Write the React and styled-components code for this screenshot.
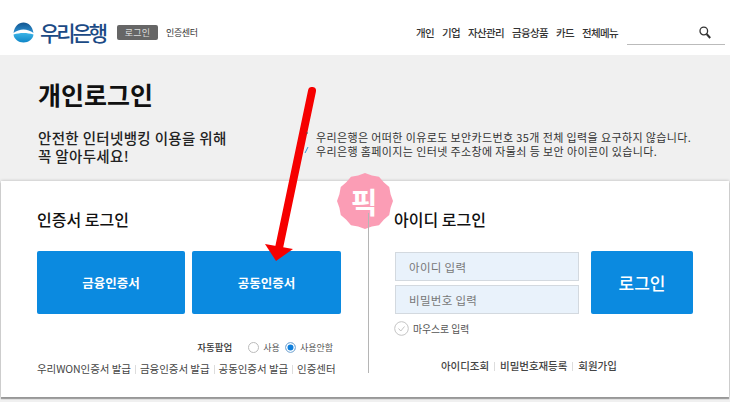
import React from 'react'
import styled, { createGlobalStyle } from 'styled-components'

const GlobalStyle = createGlobalStyle`
  html, body {
    margin: 0;
    padding: 0;
    background: #f0f0f0;
  }
  body {
    font-family: "Noto Sans CJK KR", "Noto Sans", sans-serif;
    color: #333;
  }
`

const Page = styled.div`
  position: relative;
  width: 730px;
  height: 402px;
  overflow: hidden;
  background: #f0f0f0;
`

const Header = styled.header`
  display: flex;
  align-items: center;
  height: 55px;
  padding: 9px 5px 0 13px;
  box-sizing: border-box;
  background: #fff;
`

const Brand = styled.div`
  display: flex;
  align-items: center;
  gap: 6px;
  width: 104px;
`

const BrandName = styled.span`
  font-size: 21px;
  font-weight: 500;
  letter-spacing: -3.1px;
  color: #1b4a85;
  line-height: 1;
  white-space: nowrap;
`

const LoginTag = styled.span`
  width: 41px;
  height: 15px;
  line-height: 15px;
  margin-right: 8px;
  text-align: center;
  border-radius: 2px;
  background: #666;
  color: #ddd;
  font-size: 9px;
  letter-spacing: 0.3px;
`

const CertLink = styled.span`
  font-size: 9px;
  color: #333;
  letter-spacing: -0.4px;
`

const Nav = styled.nav`
  display: flex;
  gap: 8px;
  margin-left: auto;
  margin-right: 9px;
`

const NavItem = styled.span`
  font-size: 10.5px;
  font-weight: 500;
  color: #333;
  letter-spacing: -0.66px;
  white-space: nowrap;
`

const Search = styled.div`
  display: flex;
  justify-content: flex-end;
  align-items: center;
  width: 98px;
  height: 24px;
  margin-top: 2px;
  padding-right: 14px;
  box-sizing: border-box;
  border-bottom: 1px solid #bbb;
`

const Hero = styled.section`
  display: flex;
  height: 126px;
  padding-left: 38px;
  box-sizing: border-box;
`

const HeroLeft = styled.div`
  width: 278px;
`

const HeroTitle = styled.h1`
  margin: 22px 0 0;
  font-size: 25px;
  line-height: 34px;
  font-weight: 700;
  color: #111;
`

const HeroText = styled.p`
  margin: 18px 0 0;
  font-size: 14.5px;
  line-height: 18px;
  font-weight: 500;
  color: #222;
  letter-spacing: 0.34px;
`

const Notices = styled.ul`
  margin: 75px 0 0;
  padding: 0;
  list-style: none;
`

const Notice = styled.li`
  font-size: 11px;
  line-height: 14px;
  color: #333;
  letter-spacing: 0.38px;
  white-space: nowrap;
`

const Card = styled.main`
  display: flex;
  height: 216px;
  margin: 0 1px;
  background: #fff;
  box-shadow: 0 0 3px rgba(0, 0, 0, 0.25), 0 2px 1px rgba(0, 0, 0, 0.3);
`

const Column = styled.div`
  width: ${({ $width }) => $width}px;
  padding-left: ${({ $left }) => $left}px;
  box-sizing: border-box;
`

const Divider = styled.div`
  position: relative;
  z-index: 1;
  width: 1px;
  height: 160px;
  margin-top: 32px;
  background: #b5b5b5;
`

const SectionTitle = styled.h2`
  margin: 27px 0 0;
  font-size: 16px;
  line-height: 22px;
  font-weight: 500;
  color: #111;
`

const BlueRow = styled.div`
  display: flex;
  gap: 7px;
  margin-top: 21px;
`

const BlueButton = styled.button`
  width: ${({ $width }) => $width}px;
  height: 63px;
  border: 0;
  border-radius: 2px;
  padding: 0;
  background: #0b8ae0;
  color: #fff;
  font-family: inherit;
  font-size: ${({ $size }) => $size}px;
  font-weight: ${({ $weight }) => $weight};
`

const PopupRow = styled.div`
  display: flex;
  align-items: center;
  justify-content: flex-end;
  width: 296px;
  height: 16px;
  margin-top: 25px;
  font-size: 9px;
  color: #555;
`

const PopupLabel = styled.span`
  margin-right: 16px;
  font-size: 9.5px;
  font-weight: 500;
  color: #333;
`

const Radio = styled.span`
  width: 9px;
  height: 9px;
  margin-right: 4px;
  border: 1px solid ${({ $on }) => ($on ? '#9bbad8' : '#bbb')};
  border-radius: 50%;
  background: ${({ $on }) => ($on ? '#0f7fdc' : '#fff')};
  box-shadow: ${({ $on }) => ($on ? 'inset 0 0 0 1.5px #fff' : 'none')};
`

const RadioLabel = styled.span`
  margin-right: ${({ $gap }) => $gap || 0}px;
`

const LinkRow = styled.div`
  display: flex;
  align-items: center;
  margin-top: ${({ $top }) => $top}px;
  margin-left: ${({ $indent }) => $indent || 0}px;
  font-size: 10.5px;
  font-weight: ${({ $weight }) => $weight || 400};
  line-height: 14px;
  letter-spacing: -0.05px;
  color: #444;
  white-space: nowrap;
`

const Sep = styled.span`
  width: 1px;
  height: 9px;
  margin: 0 ${({ $gap }) => $gap}px;
  background: #ddd;
`

const LoginRow = styled.div`
  display: flex;
  align-items: flex-start;
  gap: 12px;
  margin-top: 21px;
  margin-left: 1px;
`

const Fields = styled.div`
  display: flex;
  flex-direction: column;
  gap: 4px;
  padding-top: 1px;
`

const Field = styled.div`
  width: 184px;
  height: 29px;
  padding-left: 13px;
  box-sizing: border-box;
  border: 1px solid #d3d9df;
  background: #e9f2fb;
  color: #777;
  font-size: 11.5px;
  line-height: 29px;
  letter-spacing: 0.3px;
`

const MouseRow = styled.div`
  display: flex;
  align-items: center;
  gap: 4px;
  margin-top: 7px;
  font-size: 9.8px;
  color: #555;
`

const Arrow = styled.svg`
  position: absolute;
  left: 0;
  top: 0;
  pointer-events: none;
`

const Badge = styled.div`
  position: absolute;
  left: 337px;
  top: 173px;
  width: 56px;
  height: 56px;
  display: flex;
  align-items: center;
  justify-content: center;
`

const BadgeShape = styled.svg`
  position: absolute;
  left: 0;
  top: 0;
`

const BadgeText = styled.span`
  position: relative;
  left: -1px;
  font-size: 29px;
  line-height: 1;
  font-weight: 700;
  color: #fff;
`

const badgePoints = Array.from({ length: 24 }, (_, i) => {
  const a = (i / 24) * Math.PI * 2
  const r = i % 2 ? 26.5 : 28
  return `${28 + r * Math.cos(a)},${28 + r * Math.sin(a)}`
}).join(' ')

const navItems = ['개인', '기업', '자산관리', '금융상품', '카드', '전체메뉴']

export default function App() {
  return (
    <Page>
      <GlobalStyle />
      <Header>
        <Brand>
          <svg width="21" height="21" viewBox="0 0 21 21">
            <defs>
              <linearGradient id="domeTop" x1="0" y1="0" x2="0" y2="1">
                <stop offset="0" stopColor="#14558f" />
                <stop offset="1" stopColor="#2a92d4" />
              </linearGradient>
              <linearGradient id="domeBottom" x1="0" y1="0" x2="0" y2="1">
                <stop offset="0" stopColor="#3cb4e6" />
                <stop offset="1" stopColor="#0f86c8" />
              </linearGradient>
            </defs>
            <path d="M.5 11C1.5 4.5 5.5.5 10.5.5S19.5 4.5 20.5 11C17.5 9 14 7.5 10.5 7.5S3.5 9 .5 11Z" fill="url(#domeTop)" />
            <path d="M.5 12.5C4 11.5 7 11 10.5 11S17 11.5 20.5 12.5C20 17 15.5 20.5 10.5 20.5S1 17 .5 12.5Z" fill="url(#domeBottom)" />
          </svg>
          <BrandName>우리은행</BrandName>
        </Brand>
        <LoginTag>로그인</LoginTag>
        <CertLink>인증센터</CertLink>
        <Nav>
          {navItems.map((item) => (
            <NavItem key={item}>{item}</NavItem>
          ))}
        </Nav>
        <Search>
          <svg width="12" height="13" viewBox="0 0 12 13" fill="none" stroke="#333">
            <circle cx="4.8" cy="5" r="3.8" strokeWidth="1.3" />
            <path d="M7.6 8L11.2 12" strokeWidth="2" />
          </svg>
        </Search>
      </Header>

      <Hero>
        <HeroLeft>
          <HeroTitle>개인로그인</HeroTitle>
          <HeroText>
            안전한 인터넷뱅킹 이용을 위해
            <br />꼭 알아두세요!
          </HeroText>
        </HeroLeft>
        <Notices>
          <Notice>우리은행은 어떠한 이유로도 보안카드번호 35개 전체 입력을 요구하지 않습니다.</Notice>
          <Notice>우리은행 홈페이지는 인터넷 주소창에 자물쇠 등 보안 아이콘이 있습니다.</Notice>
        </Notices>
      </Hero>

      <Card>
        <Column $width={367} $left={36}>
          <SectionTitle>인증서 로그인</SectionTitle>
          <BlueRow>
            <BlueButton $width={148} $size={12.5} $weight={700}>금융인증서</BlueButton>
            <BlueButton $width={149} $size={12.5} $weight={700}>공동인증서</BlueButton>
          </BlueRow>
          <PopupRow>
            <PopupLabel>자동팝업</PopupLabel>
            <Radio />
            <RadioLabel $gap={5}>사용</RadioLabel>
            <Radio $on />
            <RadioLabel>사용안함</RadioLabel>
          </PopupRow>
          <LinkRow $top={7}>
            우리WON인증서 발급<Sep $gap={4} />금융인증서 발급<Sep $gap={4} />공동인증서 발급<Sep $gap={4} />인증센터
          </LinkRow>
        </Column>
        <Divider />
        <Column $width={360} $left={25}>
          <SectionTitle>아이디 로그인</SectionTitle>
          <LoginRow>
            <Fields>
              <Field>아이디 입력</Field>
              <Field>비밀번호 입력</Field>
            </Fields>
            <BlueButton $width={102} $size={17} $weight={500}>로그인</BlueButton>
          </LoginRow>
          <MouseRow>
            <svg width="15" height="15" viewBox="0 0 15 15" fill="none" stroke="#c4c4c4">
              <circle cx="7.5" cy="7.5" r="6.8" />
              <path d="M4.5 7.5L6.8 10L10.5 5.5" />
            </svg>
            마우스로 입력
          </MouseRow>
          <LinkRow $indent={47} $top={23} $weight={500}>
            아이디조회<Sep $gap={5} />비밀번호재등록<Sep $gap={5} />회원가입
          </LinkRow>
        </Column>
      </Card>

      <Arrow width="730" height="402" viewBox="0 0 730 402">
        <path d="M312 91L279 248" stroke="#f60000" strokeWidth="8" strokeLinecap="round" fill="none" />
        <path d="M265 244L293 249L276 261Z" fill="#f60000" />
        <path d="M308 147L305 153" stroke="#2a9ad8" strokeWidth="1" />
        <path d="M306 133L308 133" stroke="#555" strokeWidth="1" />
      </Arrow>
      <Badge>
        <BadgeShape width="56" height="56" viewBox="0 0 56 56">
          <polygon points={badgePoints} fill="#fb9db5" />
        </BadgeShape>
        <BadgeText>픽</BadgeText>
      </Badge>
    </Page>
  )
}
